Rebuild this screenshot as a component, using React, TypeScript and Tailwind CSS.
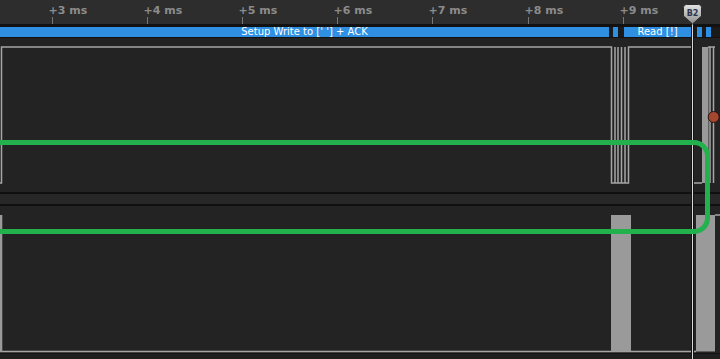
import React from 'react';

const ticks = [3, 4, 5, 6, 7, 8, 9].map((ms, i) => ({ label: `+${ms} ms`, x: Math.round(52 + i * 95.1) }));

function Ruler() {
  return (
    <div className="relative h-[24px] shrink-0 bg-[#2d2d2d]">
      {ticks.map((t) => (
        <React.Fragment key={t.label}>
          <span
            className="absolute top-[5px] whitespace-nowrap text-[11px] leading-[11px] font-bold text-[#8b8b8b]"
            style={{ left: t.x - 3.5, fontFamily: '"DejaVu Sans", sans-serif' }}
          >
            {t.label}
          </span>
          <div className="absolute top-[17px] h-[7px] w-px bg-[#777]" style={{ left: t.x }} />
        </React.Fragment>
      ))}
    </div>
  );
}

function ProtocolBar() {
  const seg = 'h-full bg-[#2f8fe3] text-white text-[10px] leading-[10px] text-center whitespace-nowrap';
  return (
    <div
      className="flex h-[10px] shrink-0 bg-[#1a1a1a]"
      style={{ fontFamily: '"DejaVu Sans", sans-serif' }}
    >
      <div className={`${seg} w-[609px]`}>Setup Write to [' '] + ACK</div>
      <div className={`${seg} ml-[4px] w-[5px]`} />
      <div className={`${seg} ml-[6px] w-[67px]`}>Read [!]</div>
      <div className={`${seg} ml-[6px] w-[5px]`} />
      <div className={`${seg} ml-[4px] w-[5px]`} />
    </div>
  );
}

function ChannelOne() {
  return (
    <div className="h-[154px] shrink-0 bg-[#232323]">
      <svg width="720" height="154" className="block">
        <g stroke="#a6a6a6" strokeWidth="1.5" fill="none">
          <path d="M-2 145 H1.5 V9 H611.5 V145 H628.5 V9 H693 V145 H702" />
          <path d="M615 9 V145 M618 9 V145 M621.5 9 V145 M625 9 V145" />
          <path d="M710 9 V145 M713.5 9 V145 M708 9 H715" />
        </g>
        <rect x="702" y="9" width="6.5" height="136" fill="#9a9a9a" />
        <circle cx="713.7" cy="79" r="5.5" fill="#a5472f" stroke="#2a1510" strokeWidth="1" />
      </svg>
    </div>
  );
}

function ChannelTwo() {
  return (
    <div className="h-[147px] shrink-0 bg-[#232323]">
      <svg width="720" height="147" className="block">
        <path d="M0 145.5 H696" stroke="#a6a6a6" strokeWidth="1.5" fill="none" />
        <path d="M715 9 H720" stroke="#a6a6a6" strokeWidth="1.5" fill="none" />
        <rect x="0" y="9" width="2.3" height="136.5" fill="#9a9a9a" />
        <rect x="611" y="9" width="20" height="136.5" fill="#9a9a9a" />
        <rect x="696" y="9" width="19" height="136.5" fill="#9a9a9a" />
      </svg>
    </div>
  );
}

function Marker() {
  return (
    <svg width="20" height="22" className="absolute left-[683px] top-[3px]">
      <defs>
        <linearGradient id="mk" x1="0" y1="0" x2="0" y2="1">
          <stop offset="0" stopColor="#e4e4e4" />
          <stop offset="1" stopColor="#8c8c8c" />
        </linearGradient>
      </defs>
      <path d="M3.5 1.5 H15.5 Q18.5 1.5 18.5 4.5 V13 L9.5 21 L0.5 13 V4.5 Q0.5 1.5 3.5 1.5 Z" fill="url(#mk)" stroke="#2b2b2b" />
      <text
        x="9.5"
        y="13"
        textAnchor="middle"
        fontSize="8"
        fontWeight="bold"
        fontFamily='"DejaVu Sans", sans-serif'
        fill="#2c3550"
      >
        B2
      </text>
    </svg>
  );
}

export default function App() {
  return (
    <div className="relative flex h-[359px] w-[720px] flex-col overflow-hidden bg-[#232323]">
      <Ruler />
      <div className="h-[3px] shrink-0 bg-[#121212]" />
      <ProtocolBar />
      <div className="h-px shrink-0 bg-[#121212]" />
      <ChannelOne />
      <div className="h-[2px] shrink-0 bg-[#101010]" />
      <div className="h-[10px] shrink-0 bg-[#272727]" />
      <div className="h-[2px] shrink-0 bg-[#101010]" />
      <ChannelTwo />
      <div className="flex-1 border-t border-[#141414] bg-[#1f1f1f]" />

      {/* cursor */}
      <div className="absolute bottom-0 left-[691px] top-[22px] w-[3px] border-x border-[#141414] bg-[#d9d9d9]" />
      <Marker />

      {/* highlight */}
      <div className="absolute left-[-20px] top-[140px] h-[94px] w-[730px] rounded-[16px] border-[5px] border-[#22b14c]" />
    </div>
  );
}
